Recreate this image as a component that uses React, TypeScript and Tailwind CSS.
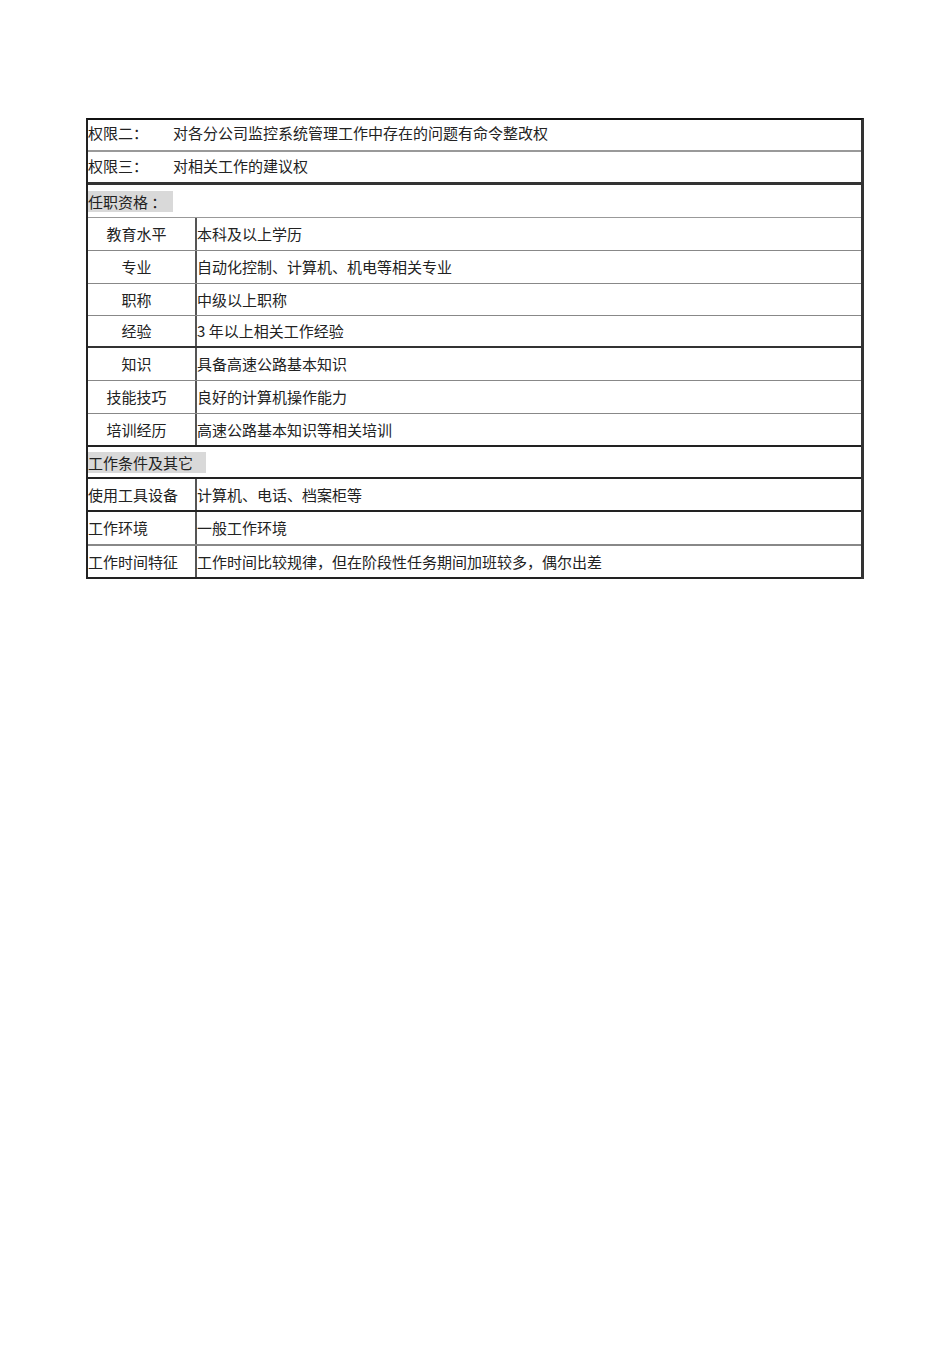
import React from "react";

const font = { fontFamily: '"Noto Sans CJK SC", "Liberation Sans", sans-serif' };

function Row({
  h,
  border,
  children,
}: {
  h: string;
  border: string;
  children: React.ReactNode;
}) {
  return <div className={`flex items-center ${h} ${border}`}>{children}</div>;
}

export default function App() {
  const quals: [string, string][] = [
    ["教育水平", "本科及以上学历"],
    ["专业", "自动化控制、计算机、机电等相关专业"],
    ["职称", "中级以上职称"],
    ["经验", "3 年以上相关工作经验"],
    ["知识", "具备高速公路基本知识"],
    ["技能技巧", "良好的计算机操作能力"],
    ["培训经历", "高速公路基本知识等相关培训"],
  ];
  const qualHeights = ["h-[33px]", "h-[33px]", "h-[32px]", "h-[32px]", "h-[33px]", "h-[33px]", "h-[33px]"];
  const qualBorders = [
    "border-b border-[#888]",
    "border-b border-[#888]",
    "border-b border-[#888]",
    "border-b-2 border-[#333]",
    "border-b border-[#888]",
    "border-b border-[#888]",
    "border-b-2 border-[#222]",
  ];
  const cond: [string, string][] = [
    ["使用工具设备", "计算机、电话、档案柜等"],
    ["工作环境", "一般工作环境"],
    ["工作时间特征", "工作时间比较规律，但在阶段性任务期间加班较多，偶尔出差"],
  ];
  const condHeights = ["h-[33px]", "h-[34px]", "h-[33px]"];
  const condBorders = ["border-b-2 border-[#222]", "border-b-2 border-[#888]", "border-b-2 border-[#222]"];

  return (
    <div className="w-[950px] h-[1345px] bg-white text-[#222] text-[15px] leading-none" style={font}>
      <div className="pt-[118px] pl-[86px]">
        <div className="w-[778px] border-t-2 border-l-2 border-r-[3px] border-t-[#111] border-l-[#222] border-r-[#333]">
          <Row h="h-[32px]" border="border-b-2 border-[#999]">
            <span className="w-[85px] pb-[5px]">权限二：</span>
            <span className="pb-[5px]">对各分公司监控系统管理工作中存在的问题有命令整改权</span>
          </Row>
          <Row h="h-[33px]" border="border-b-[3px] border-[#333]">
            <span className="w-[85px] pb-[4px]">权限三：</span>
            <span className="pb-[4px]">对相关工作的建议权</span>
          </Row>
          <Row h="h-[33px]" border="border-b border-[#999]">
            <span className="w-[85px] h-[21px] bg-[#d9d9d9] flex items-center">任职资格 ：</span>
          </Row>
          {quals.map(([k, v], i) => (
            <div key={k} className={`flex ${qualHeights[i]} ${qualBorders[i]}`}>
              <div className="w-[109px] flex items-center justify-center border-r-2 border-[#555] pb-[1px] pr-[10px]">{k}</div>
              <div className="flex items-center pb-[1px]">{v}</div>
            </div>
          ))}
          <Row h="h-[32px]" border="border-b-2 border-[#222]">
            <span className="w-[118px] h-[21px] bg-[#d9d9d9] flex items-center">工作条件及其它</span>
          </Row>
          {cond.map(([k, v], i) => (
            <div key={k} className={`flex ${condHeights[i]} ${condBorders[i]}`}>
              <div className="w-[109px] flex items-center border-r-2 border-[#555] pb-[1px]">{k}</div>
              <div className="flex items-center pb-[1px]">{v}</div>
            </div>
          ))}
        </div>
      </div>
    </div>
  );
}
